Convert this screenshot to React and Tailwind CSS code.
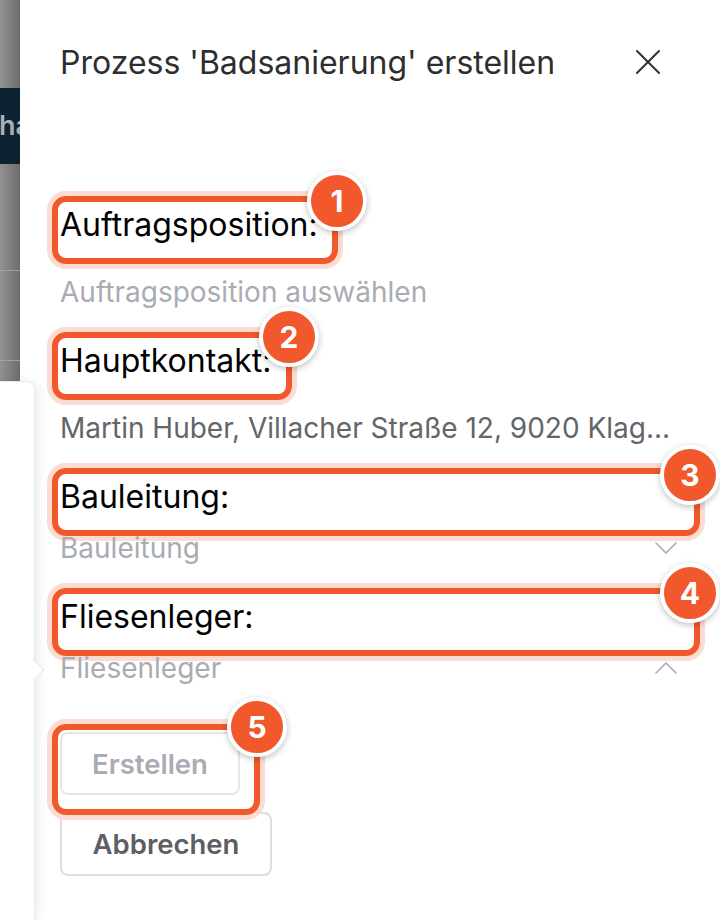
import { X, ChevronDown, ChevronUp } from 'lucide-react';

function Badge({ n, className }) {
  return (
    <span className={`absolute z-20 flex h-[60px] w-[60px] items-center justify-center rounded-full border-4 border-white bg-[#f1582c] text-[30px] font-bold leading-none text-white shadow-[0_2px_6px_rgba(0,0,0,0.25)] ${className}`}>
      {n}
    </span>
  );
}

function Highlight({ className, badge, badgeClass }) {
  return (
    <div className={`pointer-events-none absolute z-10 rounded-[14px] border-[6px] border-[#f1582c] shadow-[0_0_0_5px_#fbdcd3] ${className}`}>
      <Badge n={badge} className={badgeClass} />
    </div>
  );
}

function Label({ children, hl, badge, badgeClass }) {
  return (
    <div className="relative h-[68px] pt-[10px] text-[32px] leading-[38px] text-black">
      {children}
      <Highlight className={hl} badge={badge} badgeClass={badgeClass} />
    </div>
  );
}

export default function App() {
  return (
    <div className="relative flex h-[920px] w-[720px] overflow-hidden bg-white font-['Inter',sans-serif]">
      {/* page behind the dialog */}
      <div className="flex w-5 shrink-0 flex-col bg-gradient-to-r from-[#929292] to-[#6c6c6c]">
        <div className="mt-[88px] flex h-[76px] items-center overflow-hidden bg-[#0c2230] text-[27px] font-semibold text-[#a9b0b5]">
          <span className="-ml-[1px]">ha</span>
        </div>
        <div className="mt-[106px] h-px bg-[#a0a0a0]" />
        <div className="mt-[89px] h-px bg-[#a0a0a0]" />
      </div>

      <div className="flex-1 pl-[40px] pr-[43px]">
        <div className="flex h-[196px] items-start justify-between pt-[43px]">
          <h2 className="whitespace-nowrap text-[32px] font-normal leading-10 text-[#2e2e2e]">Prozess 'Badsanierung' erstellen</h2>
          <X size={44} strokeWidth={1.1} className="-mt-[3px] mr-[7px] shrink-0 text-[#333]" />
        </div>

        <Label hl="-left-[8px] top-0 h-[68px] w-[286px]" badge="1" badgeClass="-right-[35px] -top-[31px]">Auftragsposition:</Label>
        <div className="h-[68px] pt-[12px] text-[28px] leading-[32px] text-[#a9acb2]">Auftragsposition auswählen</div>

        <Label hl="-left-[8px] top-0 h-[68px] w-[240px]" badge="2" badgeClass="-right-[33px] -top-[31px]">Hauptkontakt:</Label>
        <div className="h-[68px] truncate pt-[12px] text-[28px] leading-[32px] text-[#626569]">Martin Huber, Villacher Straße 12, 9020 Klag...</div>

        <Label hl="-left-[8px] -right-[23px] top-0 h-[68px]" badge="3" badgeClass="-right-[26px] -top-[29px]">Bauleitung:</Label>
        <div className="relative z-10 flex h-[52px] items-start justify-between text-[28px] leading-[24px] text-[#a9acb2]">
          <span>Bauleitung</span>
          <ChevronDown size={40} strokeWidth={1} className="-mr-[9px] -mt-[8px] text-[#a9acb2]" />
        </div>

        <Label hl="-left-[8px] -right-[23px] top-0 h-[68px]" badge="4" badgeClass="-right-[26px] -top-[31px]">Fliesenleger:</Label>
        <div className="relative z-10 flex h-[76px] items-start justify-between text-[28px] leading-[24px] text-[#a9acb2]">
          <span>Fliesenleger</span>
          <ChevronUp size={40} strokeWidth={1} className="-mr-[9px] -mt-[8px] text-[#a9acb2]" />
        </div>

        <div className="relative flex flex-col items-start gap-[17px]">
          <Highlight className="-left-[8px] -top-[8px] h-[91px] w-[208px]" badge="5" badgeClass="-right-[33px] -top-[33px]" />
          <button className="flex h-[63px] w-[180px] items-center justify-center rounded-lg border-2 border-[#e4e6e9] pt-[3px] text-[27.5px] font-semibold text-[#a9acb2]">Erstellen</button>
          <button className="flex h-[64px] w-[212px] items-center justify-center rounded-lg border-2 border-[#dcdee1] pt-[2px] text-[27.5px] font-semibold text-[#5c5f63]">Abbrechen</button>
        </div>
      </div>

      {/* popover from the page behind */}
      <div className="absolute bottom-0 left-0 top-[381px] w-[35px] rounded-tr-lg border-r border-t border-[#e8e9eb] bg-white shadow-[4px_0_12px_rgba(0,0,0,0.07)]">
        <div className="absolute -right-[7px] top-[280px] h-4 w-4 rotate-45 border-r border-t border-[#e8e9eb] bg-white" />
      </div>
    </div>
  );
}
